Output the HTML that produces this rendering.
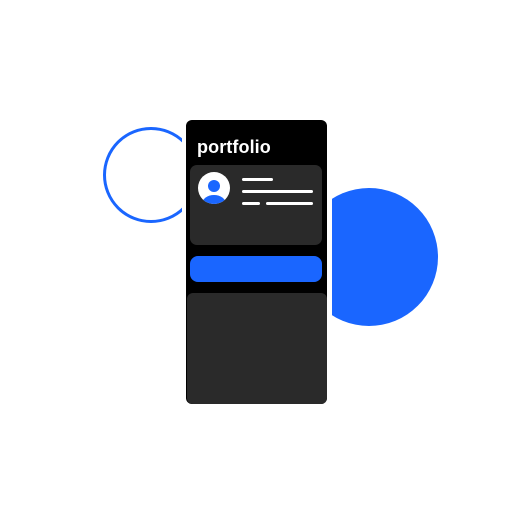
<!DOCTYPE html>
<html><head><style>
html,body{margin:0;padding:0;background:#fff;width:512px;height:513px;overflow:hidden;position:relative}
div{position:absolute;box-sizing:border-box}
</style></head><body>
<div style="left:103px;top:127px;width:96px;height:96px;border:3px solid #1a66ff;border-radius:50%"></div>
<div style="left:300px;top:188px;width:138px;height:138px;background:#1a66ff;border-radius:50%"></div>
<div style="left:182px;top:116px;width:150px;height:292px;background:#fff;border-radius:9px"></div>
<div style="left:186px;top:120px;width:141px;height:284px;background:#000;border-radius:6px"></div>
<div style="left:197px;top:137px;color:#fff;font:600 18px 'Liberation Sans',sans-serif;letter-spacing:0.1px">portfolio</div>
<div style="left:190px;top:165px;width:132px;height:80px;background:#2a2a2a;border-radius:7px"></div>
<svg style="position:absolute;left:198px;top:172px" width="32" height="32" viewBox="0 0 32 32">
<defs><clipPath id="c"><circle cx="16" cy="16" r="16"/></clipPath></defs>
<circle cx="16" cy="16" r="16" fill="#fff"/>
<g clip-path="url(#c)" fill="#1a66ff"><circle cx="16" cy="14" r="6"/><ellipse cx="16" cy="32" rx="12" ry="9"/></g>
</svg>
<div style="left:242px;top:178px;width:31px;height:3px;background:#fff;border-radius:2px"></div>
<div style="left:242px;top:190px;width:71px;height:3px;background:#fff;border-radius:2px"></div>
<div style="left:242px;top:202px;width:18px;height:3px;background:#fff;border-radius:2px"></div>
<div style="left:266px;top:202px;width:47px;height:3px;background:#fff;border-radius:2px"></div>
<div style="left:190px;top:256px;width:132px;height:26px;background:#1a66ff;border-radius:8px"></div>
<div style="left:187px;top:293px;width:140px;height:111px;background:#2a2a2a;border-radius:6px"></div>
</body></html>
